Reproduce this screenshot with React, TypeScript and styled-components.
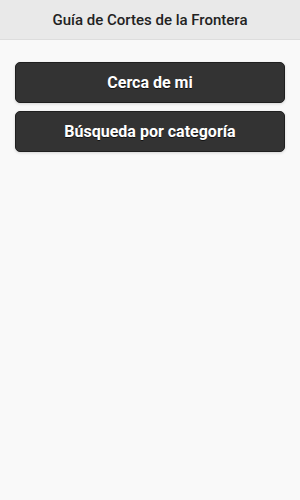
import React from 'react';
import styled, {createGlobalStyle} from 'styled-components';

const GlobalStyle = createGlobalStyle`
  html, body {
    margin: 0;
    padding: 0;
    background: #f9f9f9;
    font-family: Roboto, "Liberation Sans", sans-serif;
  }
`;

const Page = styled.div`
  min-height: 500px;
  background: #f9f9f9;
`;

const Header = styled.header`
  height: 40px;
  box-sizing: border-box;
  display: flex;
  align-items: center;
  justify-content: center;
  background: #e9e9e9;
  border-bottom: 1px solid #dddddd;
  color: #222;
  font-size: 15px;
  font-weight: 500;
`;

const Content = styled.div`
  display: flex;
  flex-direction: column;
  gap: 8px;
  padding: 22px 15px;
`;

const Button = styled.button`
  height: 41px;
  box-sizing: border-box;
  background: #333333;
  border: 1px solid #1f1f1f;
  border-radius: 5px;
  color: #fff;
  font-family: Roboto, "Liberation Sans", sans-serif;
  font-size: 16px;
  font-weight: 700;
  text-shadow: 0 1px 0 #111;
  box-shadow: 0 1px 3px rgba(0, 0, 0, 0.15);
  cursor: pointer;
`;

export default function App() {
  return (
    <Page>
      <GlobalStyle/>
      <Header>Guía de Cortes de la Frontera</Header>
      <Content>
        <Button>Cerca de mi</Button>
        <Button>Búsqueda por categoría</Button>
      </Content>
    </Page>
  );
}
